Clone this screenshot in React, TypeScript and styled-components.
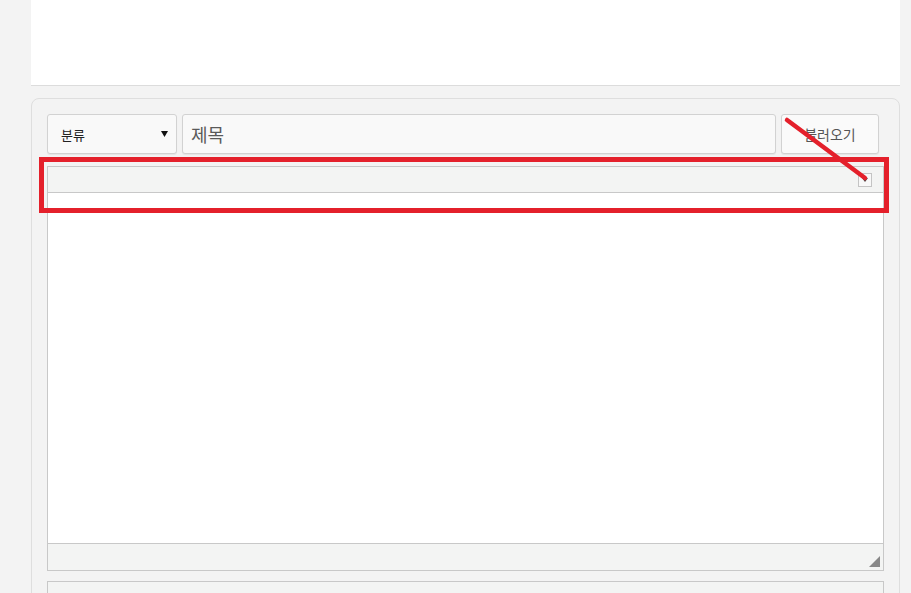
import React from "react";
import styled, { createGlobalStyle } from "styled-components";

const GlobalStyle = createGlobalStyle`
  html, body {
    margin: 0;
    padding: 0;
    background: #f3f3f3;
    font-family: "Noto Sans CJK KR", "Liberation Sans", sans-serif;
  }
  * {
    box-sizing: border-box;
  }
`;

const Page = styled.div`
  padding: 0 11px 0 31px;
  height: 593px;
  overflow: hidden;
`;

const TopCard = styled.div`
  height: 86px;
  background: #fff;
  border-bottom: 1px solid #dcdcdc;
`;

const Panel = styled.div`
  position: relative;
  margin-top: 12px;
  padding: 15px 15px 0 15px;
  border: 1px solid #dedede;
  border-radius: 8px;
  background: #f3f3f3;
`;

const Row = styled.div`
  display: flex;
  gap: 5px;
  margin-right: 5px;
  height: 40px;
`;

const Field = styled.div<{ $width?: number }>`
  display: flex;
  align-items: center;
  height: 100%;
  flex: ${(p) => (p.$width ? `0 0 ${p.$width}px` : "1")};
  background: #f9f9f9;
  border: 1px solid #d2d2d2;
  border-radius: 3px;
  box-shadow: 0 1px 1px rgba(0, 0, 0, 0.06);
`;

const SelectField = styled(Field)`
  justify-content: space-between;
  padding: 0 8px 0 13px;
  font-size: 13px;
  color: #222;
`;

const TitleField = styled(Field)`
  padding: 0 8px;
  font-size: 18px;
  color: #5a5a5a;
`;

const LoadButton = styled(Field)`
  justify-content: center;
  font-size: 14px;
  color: #555;
  background: #fafafa;
`;

const Editor = styled.div`
  margin-top: 12px;
  border: 1px solid #c8c8c8;
  background: #fff;
`;

const Toolbar = styled.div`
  display: flex;
  justify-content: flex-end;
  align-items: center;
  height: 26px;
  padding-right: 11px;
  background: #f3f4f3;
  border-bottom: 1px solid #c8c8c8;
`;

const MenuToggle = styled.div`
  width: 14px;
  height: 14px;
  display: flex;
  align-items: center;
  justify-content: center;
  border: 1px solid #c4c4c4;
  background: #f8f8f8;
`;

const Content = styled.div`
  height: 350px;
  background: #fff;
`;

const StatusBar = styled.div`
  display: flex;
  justify-content: flex-end;
  align-items: flex-end;
  height: 27px;
  padding: 0 3px 3px 0;
  background: #f3f4f3;
  border-top: 1px solid #c8c8c8;
`;

const NextBox = styled.div`
  margin-top: 10px;
  height: 30px;
  border: 1px solid #c8c8c8;
  background: #f3f4f3;
`;

const Highlight = styled.div`
  position: absolute;
  left: 7px;
  top: 58px;
  width: 850px;
  height: 56px;
  border: 5px solid #e4202b;
  pointer-events: none;
`;

const Stroke = styled.svg`
  position: absolute;
  left: 0;
  top: 0;
  pointer-events: none;
`;

const App = () => {
  return (
    <>
      <GlobalStyle />
      <Page>
        <TopCard />
        <Panel>
          <Row>
            <SelectField $width={130}>
              <span>분류</span>
              <svg width="7" height="6" viewBox="0 0 7 6">
                <path d="M0 0 L7 0 L3.5 6 Z" fill="#111" />
              </svg>
            </SelectField>
            <TitleField>제목</TitleField>
            <LoadButton $width={98}>불러오기</LoadButton>
          </Row>
          <Editor>
            <Toolbar>
              <MenuToggle>
                <svg width="6" height="4" viewBox="0 0 6 4">
                  <path d="M0 0 L6 0 L3 4 Z" fill="#444" />
                </svg>
              </MenuToggle>
            </Toolbar>
            <Content />
            <StatusBar>
              <svg width="11" height="11" viewBox="0 0 11 11">
                <path d="M11 0 L11 11 L0 11 Z" fill="#888" />
              </svg>
            </StatusBar>
          </Editor>
          <NextBox />
          <Highlight />
          <Stroke width="870" height="120">
            <line
              x1="755"
              y1="21"
              x2="833"
              y2="79"
              stroke="#e4202b"
              strokeWidth="4.5"
              strokeLinecap="round"
            />
          </Stroke>
        </Panel>
      </Page>
    </>
  );
};

export default App;
